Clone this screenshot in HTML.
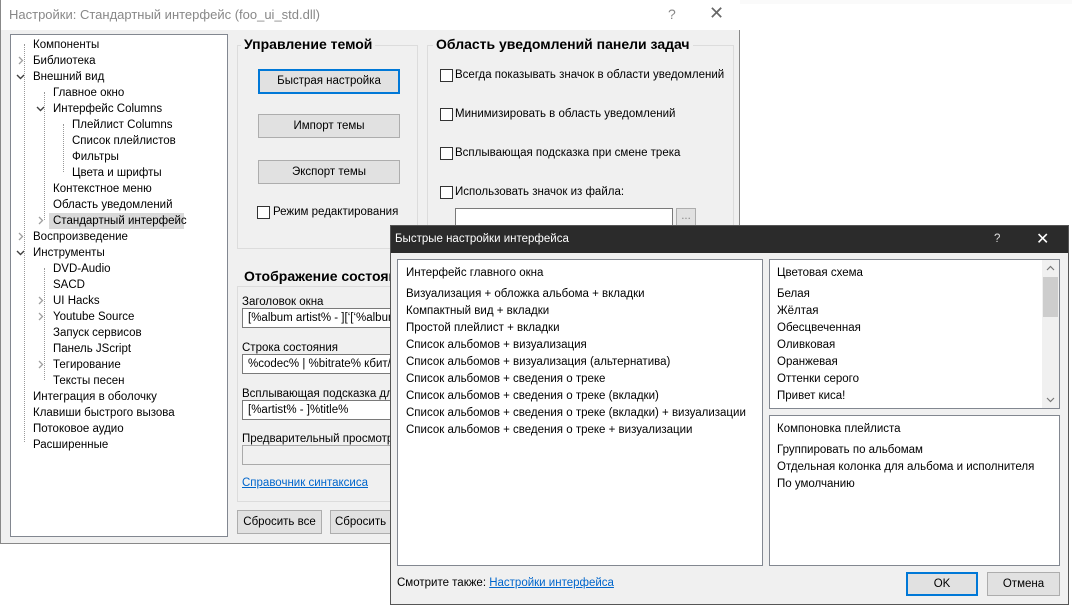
<!DOCTYPE html>
<html><head><meta charset="utf-8"><style>
*{box-sizing:border-box;margin:0;padding:0}
body{width:1072px;height:609px;position:relative;overflow:hidden;background:#fff;font-family:"Liberation Sans",sans-serif;font-size:11.5px;color:#000}
.a{position:absolute}
.main{left:0;top:0;width:740px;height:544px;background:#f0f0f0;border:1px solid #888;border-top:none}
.tb{left:0;top:0;width:739px;height:30px;background:#fff}
.tree{left:9px;top:34px;width:218px;height:503px;background:#fff;border:1px solid #828790}
.tr{position:absolute;white-space:nowrap;line-height:16px}
.ch{position:absolute;width:9px;height:9px}
.grp{border:1px solid #dcdcdc}
.gt{position:absolute;background:#f0f0f0;font-weight:bold;font-size:14px;padding:0 3px;white-space:nowrap}
.btn{position:absolute;background:#e1e1e1;border:1px solid #adadad;text-align:center;line-height:22px}
.cb{position:absolute;width:13px;height:13px;border:1px solid #333;background:#fff}
.edit{position:absolute;background:#fff;border:1px solid #7a7a7a;padding-left:5px;line-height:18px;white-space:nowrap;overflow:hidden}
.dlg{left:390px;top:225px;width:679px;height:380px;background:#f0f0f0;border:1px solid #555}
.dt{left:0;top:0;width:677px;height:27px;background:#2b2b2b;color:#fff;line-height:27px;padding-left:4px;font-size:11.5px}
.box{position:absolute;background:#fff;border:1px solid #828790}
.li{position:absolute;white-space:nowrap;font-size:11.5px}
a{color:#0066cc;text-decoration:underline}
</style></head><body>
<svg width="0" height="0" style="position:absolute"><defs>
<symbol id="r" viewBox="0 0 9 9"><path d="M3 1 L6.5 4.5 L3 8" fill="none" stroke="#a0a0a0" stroke-width="1.3"/></symbol>
<symbol id="d" viewBox="0 0 9 9"><path d="M1 3 L4.5 6.5 L8 3" fill="none" stroke="#404040" stroke-width="1.4"/></symbol>
</defs></svg>
<div class="a" style="left:0;top:0;width:1072px;height:4px;background:#fafafa"></div>
<div class="a main">
 <div class="a tb"><span class="a" style="left:8px;top:7px;color:#888;font-size:13px">Настройки: Стандартный интерфейс (foo_ui_std.dll)</span>
 <span class="a" style="left:667px;top:6px;color:#888;font-size:14px">?</span>
 <span class="a" style="left:708px;top:3px;color:#666;font-size:18px">✕</span></div>
 <div class="a tree">
  <div class="tr" style="left:22px;top:2px">Компоненты</div>
  <svg class="ch" style="left:5px;top:21px"><use href="#r"/></svg><div class="tr" style="left:22px;top:18px">Библиотека</div>
  <svg class="ch" style="left:5px;top:37px"><use href="#d"/></svg><div class="tr" style="left:22px;top:34px">Внешний вид</div>
  <div class="tr" style="left:42px;top:50px">Главное окно</div>
  <svg class="ch" style="left:25px;top:69px"><use href="#d"/></svg><div class="tr" style="left:42px;top:66px">Интерфейс Columns</div>
  <div class="tr" style="left:61px;top:82px">Плейлист Columns</div>
  <div class="tr" style="left:61px;top:98px">Список плейлистов</div>
  <div class="tr" style="left:61px;top:114px">Фильтры</div>
  <div class="tr" style="left:61px;top:130px">Цвета и шрифты</div>
  <div class="tr" style="left:42px;top:146px">Контекстное меню</div>
  <div class="tr" style="left:42px;top:162px">Область уведомлений</div>
  <div class="tr" style="left:38px;top:178px;width:135px;height:16px;background:#d9d9d9"></div>
  <svg class="ch" style="left:25px;top:181px"><use href="#r"/></svg><div class="tr" style="left:42px;top:178px">Стандартный интерфейс</div>
  <svg class="ch" style="left:5px;top:197px"><use href="#r"/></svg><div class="tr" style="left:22px;top:194px">Воспроизведение</div>
  <svg class="ch" style="left:5px;top:213px"><use href="#d"/></svg><div class="tr" style="left:22px;top:210px">Инструменты</div>
  <div class="tr" style="left:42px;top:226px">DVD-Audio</div>
  <div class="tr" style="left:42px;top:242px">SACD</div>
  <svg class="ch" style="left:25px;top:261px"><use href="#r"/></svg><div class="tr" style="left:42px;top:258px">UI Hacks</div>
  <svg class="ch" style="left:25px;top:277px"><use href="#r"/></svg><div class="tr" style="left:42px;top:274px">Youtube Source</div>
  <div class="tr" style="left:42px;top:290px">Запуск сервисов</div>
  <div class="tr" style="left:42px;top:306px">Панель JScript</div>
  <svg class="ch" style="left:25px;top:325px"><use href="#r"/></svg><div class="tr" style="left:42px;top:322px">Тегирование</div>
  <div class="tr" style="left:42px;top:338px">Тексты песен</div>
  <div class="tr" style="left:22px;top:354px">Интеграция в оболочку</div>
  <div class="tr" style="left:22px;top:370px">Клавиши быстрого вызова</div>
  <div class="tr" style="left:22px;top:386px">Потоковое аудио</div>
  <div class="tr" style="left:22px;top:402px">Расширенные</div>
  <div class="a" style="left:13px;top:9px;width:1px;height:398px;border-left:1px dotted #999"></div>
  <div class="a" style="left:33px;top:57px;width:1px;height:128px;border-left:1px dotted #999"></div>
  <div class="a" style="left:52px;top:89px;width:1px;height:48px;border-left:1px dotted #999"></div>
  <div class="a" style="left:33px;top:233px;width:1px;height:112px;border-left:1px dotted #999"></div>
 </div>
 <div class="a grp" style="left:236px;top:45px;width:181px;height:204px"></div>
 <div class="gt" style="left:240px;top:36px">Управление темой</div>
 <div class="btn" style="left:257px;top:69px;width:142px;height:25px;border:2px solid #0078d7;line-height:21px">Быстрая настройка</div>
 <div class="btn" style="left:257px;top:114px;width:142px;height:24px">Импорт темы</div>
 <div class="btn" style="left:257px;top:160px;width:142px;height:24px">Экспорт темы</div>
 <div class="cb" style="left:256px;top:206px"></div><div class="a" style="left:272px;top:206px">Режим редактирования</div>
 <div class="a grp" style="left:426px;top:45px;width:307px;height:186px"></div>
 <div class="gt" style="left:432px;top:36px">Область уведомлений панели задач</div>
 <div class="cb" style="left:439px;top:69px"></div><div class="a" style="left:454px;top:69px">Всегда показывать значок в области уведомлений</div>
 <div class="cb" style="left:439px;top:108px"></div><div class="a" style="left:454px;top:108px">Минимизировать в область уведомлений</div>
 <div class="cb" style="left:439px;top:147px"></div><div class="a" style="left:454px;top:147px">Всплывающая подсказка при смене трека</div>
 <div class="cb" style="left:439px;top:186px"></div><div class="a" style="left:454px;top:186px">Использовать значок из файла:</div>
 <div class="edit" style="left:454px;top:208px;width:218px;height:20px"></div>
 <div class="btn" style="left:675px;top:208px;width:20px;height:18px;line-height:14px;color:#888">...</div>
 <div class="a grp" style="left:236px;top:286px;width:180px;height:216px"></div>
 <div class="gt" style="left:240px;top:268px">Отображение состояния</div>
 <div class="a" style="left:241px;top:296px">Заголовок окна</div>
 <div class="edit" style="left:241px;top:308px;width:160px;height:20px">[%album artist% - ][‘[‘%album%</div>
 <div class="a" style="left:241px;top:342px">Строка состояния</div>
 <div class="edit" style="left:241px;top:354px;width:160px;height:20px">%codec% | %bitrate% кбит/с</div>
 <div class="a" style="left:241px;top:388px">Всплывающая подсказка для</div>
 <div class="edit" style="left:241px;top:400px;width:160px;height:20px">[%artist% - ]%title%</div>
 <div class="a" style="left:241px;top:433px">Предварительный просмотр</div>
 <div class="edit" style="left:241px;top:445px;width:160px;height:20px;background:#f0f0f0;border-color:#aaa"></div>
 <div class="a" style="left:241px;top:477px"><a>Справочник синтаксиса</a></div>
 <div class="btn" style="left:236px;top:510px;width:85px;height:24px">Сбросить все</div>
 <div class="btn" style="left:329px;top:510px;width:85px;height:24px;text-align:left;padding-left:4px;overflow:hidden">Сбросить данные</div>
</div>
<div class="a dlg">
 <div class="a dt">Быстрые настройки интерфейса<span class="a" style="left:603px;top:0;color:#ddd">?</span><span class="a" style="left:645px;top:0;font-size:16px">✕</span></div>
 <div class="box" style="left:6px;top:33px;width:366px;height:307px">
  <div class="li" style="left:8px;top:7px">Интерфейс главного окна</div>
  <div class="li" style="left:8px;top:28px">Визуализация + обложка альбома + вкладки</div>
  <div class="li" style="left:8px;top:45px">Компактный вид + вкладки</div>
  <div class="li" style="left:8px;top:62px">Простой плейлист + вкладки</div>
  <div class="li" style="left:8px;top:79px">Список альбомов + визуализация</div>
  <div class="li" style="left:8px;top:96px">Список альбомов + визуализация (альтернатива)</div>
  <div class="li" style="left:8px;top:113px">Список альбомов + сведения о треке</div>
  <div class="li" style="left:8px;top:130px">Список альбомов + сведения о треке (вкладки)</div>
  <div class="li" style="left:8px;top:147px">Список альбомов + сведения о треке (вкладки) + визуализации</div>
  <div class="li" style="left:8px;top:164px">Список альбомов + сведения о треке + визуализации</div>
 </div>
 <div class="box" style="left:378px;top:33px;width:291px;height:150px">
  <div class="li" style="left:7px;top:7px">Цветовая схема</div>
  <div class="li" style="left:7px;top:28px">Белая</div>
  <div class="li" style="left:7px;top:45px">Жёлтая</div>
  <div class="li" style="left:7px;top:62px">Обесцвеченная</div>
  <div class="li" style="left:7px;top:79px">Оливковая</div>
  <div class="li" style="left:7px;top:96px">Оранжевая</div>
  <div class="li" style="left:7px;top:113px">Оттенки серого</div>
  <div class="li" style="left:7px;top:130px">Привет киса!</div>
  <div class="a" style="left:272px;top:0;width:17px;height:148px;background:#f0f0f0"></div>
  <svg class="a" style="left:276px;top:5px" width="9" height="6"><path d="M1 5 L4.5 1.5 L8 5" fill="none" stroke="#777" stroke-width="1.2"/></svg>
  <div class="a" style="left:273px;top:17px;width:15px;height:40px;background:#cdcdcd"></div>
  <svg class="a" style="left:276px;top:137px" width="9" height="6"><path d="M1 1 L4.5 4.5 L8 1" fill="none" stroke="#777" stroke-width="1.2"/></svg>
 </div>
 <div class="box" style="left:378px;top:189px;width:291px;height:151px">
  <div class="li" style="left:7px;top:7px">Компоновка плейлиста</div>
  <div class="li" style="left:7px;top:28px">Группировать по альбомам</div>
  <div class="li" style="left:7px;top:45px">Отдельная колонка для альбома и исполнителя</div>
  <div class="li" style="left:7px;top:62px">По умолчанию</div>
 </div>
 <div class="li" style="left:6px;top:351px">Смотрите также: <a>Настройки интерфейса</a></div>
 <div class="btn" style="left:515px;top:346px;width:72px;height:24px;border:2px solid #0078d7;line-height:20px">OK</div>
 <div class="btn" style="left:596px;top:346px;width:73px;height:24px">Отмена</div>
</div>
</body></html>
